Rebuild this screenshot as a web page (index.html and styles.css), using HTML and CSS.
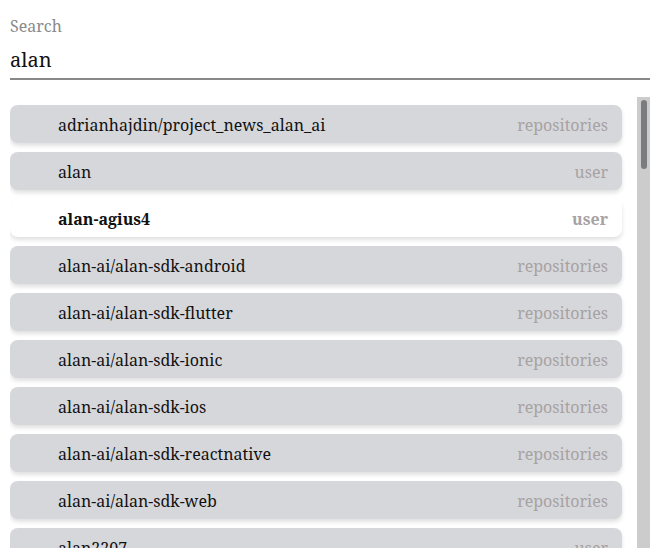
FILE: index.html
```html
<!DOCTYPE html>
<html lang="en">
<head>
<meta charset="utf-8">
<title>Search</title>
<link rel="stylesheet" href="styles.css">
</head>
<body>
<div class="page">
  <label class="search-label" for="q">Search</label>
  <input class="search-input" id="q" type="text" value="alan">
  <div class="results-wrap">
    <ul class="results">
      <li class="item"><span class="name">adrianhajdin/project_news_alan_ai</span><span class="kind">repositories</span></li>
      <li class="item"><span class="name">alan</span><span class="kind">user</span></li>
      <li class="item active"><span class="name">alan-agius4</span><span class="kind">user</span></li>
      <li class="item"><span class="name">alan-ai/alan-sdk-android</span><span class="kind">repositories</span></li>
      <li class="item"><span class="name">alan-ai/alan-sdk-flutter</span><span class="kind">repositories</span></li>
      <li class="item"><span class="name">alan-ai/alan-sdk-ionic</span><span class="kind">repositories</span></li>
      <li class="item"><span class="name">alan-ai/alan-sdk-ios</span><span class="kind">repositories</span></li>
      <li class="item"><span class="name">alan-ai/alan-sdk-reactnative</span><span class="kind">repositories</span></li>
      <li class="item"><span class="name">alan-ai/alan-sdk-web</span><span class="kind">repositories</span></li>
      <li class="item"><span class="name">alan2207</span><span class="kind">user</span></li>
      <li class="item"><span class="name">alan2207/bulletproof-react</span><span class="kind">repositories</span></li>
      <li class="item"><span class="name">alanb</span><span class="kind">user</span></li>
      <li class="item"><span class="name">alanbarber</span><span class="kind">user</span></li>
      <li class="item"><span class="name">alanchan</span><span class="kind">user</span></li>
      <li class="item"><span class="name">alandefreitas</span><span class="kind">user</span></li>
      <li class="item"><span class="name">alandefreitas/matplotplusplus</span><span class="kind">repositories</span></li>
      <li class="item"><span class="name">alandipert</span><span class="kind">user</span></li>
      <li class="item"><span class="name">alanfoster</span><span class="kind">user</span></li>
      <li class="item"><span class="name">alangpierce</span><span class="kind">user</span></li>
      <li class="item"><span class="name">alangpierce/sucrase</span><span class="kind">repositories</span></li>
    </ul>
    <div class="scrollbar"><div class="thumb"></div></div>
  </div>
</div>
</body>
</html>
```

FILE: styles.css
```css
html, body {
  margin: 0;
  padding: 0;
  background: #fff;
}

body {
  font-family: "Noto Serif", "Droid Serif", "DejaVu Serif", serif;
  color: #111;
}

.page {
  padding: 14px 16px 10px 10px;
  display: flex;
  flex-direction: column;
}

.search-label {
  display: block;
  font-size: 16px;
  line-height: 24px;
  color: #8a8a8a;
}

.search-input {
  display: block;
  box-sizing: border-box;
  width: 100%;
  height: 35px;
  margin: 7px 0 0;
  padding: 0 0 5px;
  border: none;
  border-bottom: 2px solid #888;
  outline: none;
  font-family: inherit;
  font-size: 20px;
  color: #111;
  background: transparent;
}

.results-wrap {
  margin-top: 17px;
  height: 451px;
  display: flex;
}

.results {
  flex: 1;
  list-style: none;
  margin: 0;
  padding: 8px 15px 10px 0;
  overflow: hidden;
  display: flex;
  flex-direction: column;
  gap: 9px;
}

.scrollbar {
  flex: 0 0 13px;
  background: #cccccc;
  padding: 3px 3px 0 4px;
  box-sizing: border-box;
}

.thumb {
  height: 69px;
  background: #7a7c7d;
  border-radius: 3px;
}

.item {
  flex: 0 0 auto;
  display: flex;
  align-items: center;
  justify-content: space-between;
  height: 38px;
  box-sizing: border-box;
  padding: 2px 14px 0 48px;
  border-radius: 8px;
  background: #d6d7db;
  box-shadow: 0 3px 4px rgba(0, 0, 0, 0.12);
  font-size: 16px;
}

.item.active {
  background: #fff;
  font-weight: bold;
}

.name {
  color: #111;
}

.kind {
  color: #a8a2a2;
}
```
